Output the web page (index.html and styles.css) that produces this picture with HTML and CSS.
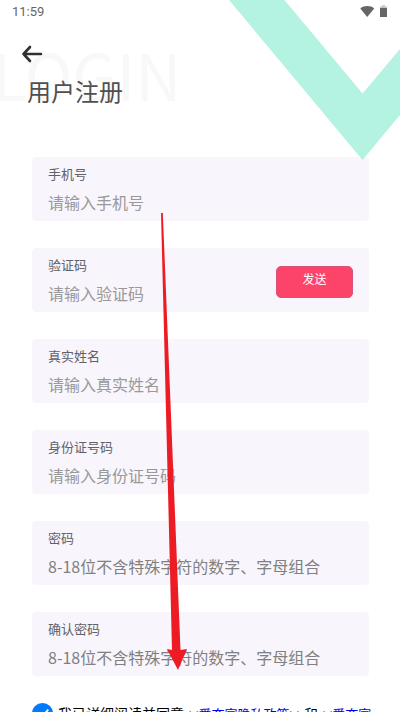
FILE: index.html
```html
<!DOCTYPE html>
<html lang="zh-CN">
<head>
<meta charset="utf-8">
<meta name="viewport" content="width=device-width, initial-scale=1">
<title>用户注册</title>
<link rel="stylesheet" href="styles.css">
</head>
<body>
<div class="screen">
  <div class="status">
    <span>11:59</span>
    <svg class="status-icons" viewBox="0 0 28 14" aria-hidden="true">
      <path d="M0.300 3.500C4 .3 10.500 .3 14.200 3.500L7.200 12Z"/>
      <path class="battery-cap" d="M22 .3h3v1.200h2v2h-7v-2h2z"/>
      <path d="M20 3h7v9h-7z"/>
    </svg>
  </div>
  <header class="header">
    <span class="watermark" aria-hidden="true">LOGIN</span>
    <button class="back" type="button" aria-label="返回">
      <svg viewBox="0 0 22 18"><path d="M9 2L2.500 9L9 16M2.500 9H20"/></svg>
    </button>
    <h1>用户注册</h1>
  </header>
  <form class="form">
    <div class="field">
      <div class="entry"><label for="phone">手机号</label><input id="phone" type="tel" placeholder="请输入手机号"></div>
    </div>
    <div class="field">
      <div class="entry"><label for="code">验证码</label><input id="code" type="text" placeholder="请输入验证码"></div>
      <button class="send" type="button">发送</button>
    </div>
    <div class="field">
      <div class="entry"><label for="realname">真实姓名</label><input id="realname" type="text" placeholder="请输入真实姓名"></div>
    </div>
    <div class="field">
      <div class="entry"><label for="idcard">身份证号码</label><input id="idcard" type="text" placeholder="请输入身份证号码"></div>
    </div>
    <div class="field secret">
      <div class="entry"><label for="password">密码</label><input id="password" type="password" placeholder="8-18位不含特殊字符的数字、字母组合"></div>
    </div>
    <div class="field secret">
      <div class="entry"><label for="confirm">确认密码</label><input id="confirm" type="password" placeholder="8-18位不含特殊字符的数字、字母组合"></div>
    </div>
    <div class="terms">
      <span class="check">
        <input id="agree" type="checkbox" checked>
        <svg viewBox="0 0 22 22" aria-hidden="true"><path d="M6 11L10 15L17 7"/></svg>
      </span>
      <p><label for="agree">我已详细阅读并同意</label><a href="#privacy">&lt;&lt;爱夺富隐私政策&gt;&gt;</a>和<a href="#service">&lt;&lt;爱夺富</a></p>
    </div>
  </form>
  <svg class="ribbon" viewBox="0 0 171 160" aria-hidden="true"><path d="M0 0H55.500L133.500 93.500L171 49V115L133.500 160Z"/></svg>
  <svg class="pointer" viewBox="0 0 30 460" aria-hidden="true"><path d="M1 2H2.800L20.500 439L27 438L18 459L7 438L12 439Z"/></svg>
</div>
</body>
</html>
```
FILE: styles.css
```css
* {
  box-sizing: border-box;
}

body {
  margin: 0;
  background: #fff;
  color: #000;
  font-family: "Noto Sans CJK SC", sans-serif;
}

.screen {
  position: relative;
  height: 100vh;
  overflow: hidden;
}

.ribbon {
  position: absolute;
  top: 0;
  right: 0;
  width: 171px;
  height: 160px;
  fill: #b4f3e1;
  pointer-events: none;
}

.status {
  position: relative;
  z-index: 1;
  display: flex;
  justify-content: space-between;
  align-items: center;
  height: 24px;
  padding: 0 12px;
  color: #666;
  font: 400 13px/24px Roboto, sans-serif;
}

.status-icons {
  width: 28px;
  height: 14px;
  fill: #666;
}

.status-icons .battery-cap {
  fill: #c4c4c4;
}

.header {
  position: relative;
  height: 133px;
  padding: 20px 21px 0;
}

.watermark {
  position: absolute;
  top: 1px;
  left: -8px;
  color: #f8f8f8;
  font-size: 64px;
  line-height: 96px;
}

.back {
  position: relative;
  display: block;
  width: 22px;
  height: 20px;
  padding: 0;
  border: 0;
  background: none;
}

.back svg {
  display: block;
  width: 22px;
  height: 20px;
  fill: none;
  stroke: #303133;
  stroke-width: 2.6;
  stroke-linecap: round;
  stroke-linejoin: round;
}

h1 {
  position: relative;
  margin: 9px 6px 0;
  color: #505050;
  font-size: 24px;
  font-weight: 400;
  line-height: 36px;
}

.form {
  position: relative;
  display: flex;
  flex-direction: column;
  gap: 27px;
  padding: 0 31px 0 32px;
}

.field {
  display: flex;
  align-items: center;
  height: 64px;
  padding: 0 16px;
  border-radius: 4px;
  background: #f8f5fc;
}

.entry {
  flex: 1;
  min-width: 0;
}

.entry label {
  display: block;
  color: #606266;
  font-size: 13px;
  line-height: 20px;
}

.entry input {
  display: block;
  width: 100%;
  height: 24px;
  margin-top: 6px;
  padding: 0;
  border: 0;
  outline: 0;
  background: none;
  font: 16px/24px "Noto Sans CJK SC", sans-serif;
}

.entry input::placeholder {
  color: #999;
  opacity: 1;
}

.secret input::placeholder {
  color: #808080;
}

.send {
  width: 77px;
  height: 32px;
  margin-top: 4px;
  padding: 0 0 6px;
  border: 1px solid #d95478;
  border-radius: 5px;
  background: #fc446b;
  color: #fff;
  font: 12px/18px "Noto Sans CJK SC", sans-serif;
}

.terms {
  display: flex;
  gap: 5px;
}

.check {
  position: relative;
  flex: none;
  width: 21px;
  height: 21px;
}

.check input {
  display: block;
  width: 21px;
  height: 21px;
  margin: 0;
  border-radius: 50%;
  appearance: none;
  background: #007aff;
}

.check svg {
  position: absolute;
  inset: 0;
  fill: none;
  stroke: #fff;
  stroke-width: 2;
  pointer-events: none;
}

.terms p {
  margin: 0;
  font-size: 14px;
  line-height: 20px;
  white-space: nowrap;
}

.terms a {
  color: #00e;
  font-size: 13px;
  text-decoration: none;
}

.pointer {
  position: absolute;
  top: 211px;
  left: 160px;
  width: 30px;
  height: 460px;
  fill: #ed1c24;
  pointer-events: none;
}
```
